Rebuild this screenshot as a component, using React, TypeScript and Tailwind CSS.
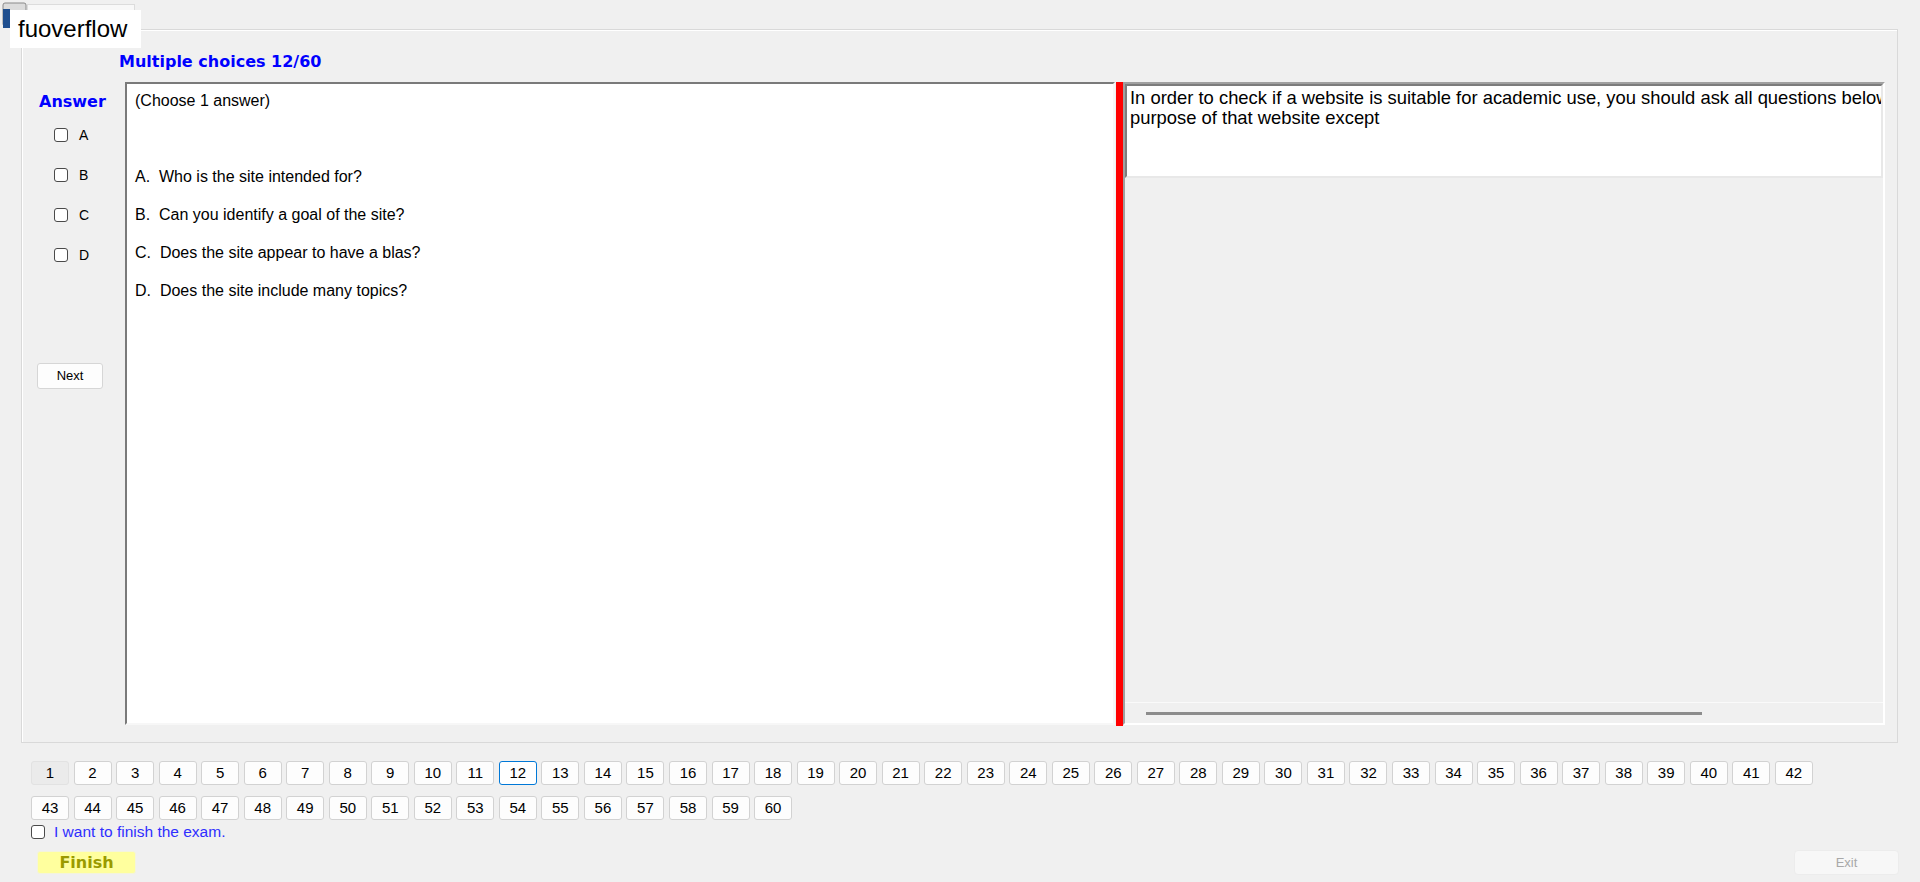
import React from "react";

const row1 = Array.from({ length: 42 }, (_, i) => i + 1);
const row2 = Array.from({ length: 18 }, (_, i) => i + 43);

const options = [
  "A.  Who is the site intended for?",
  "B.  Can you identify a goal of the site?",
  "C.  Does the site appear to have a blas?",
  "D.  Does the site include many topics?",
];

function Box({ className = "" }: { className?: string }) {
  return (
    <span
      className={`block size-[14px] shrink-0 rounded-[3px] border border-[#4a4a4a] bg-white ${className}`}
    />
  );
}

function NumButton({ n }: { n: number }) {
  let look = "border-[#d2d2d2] bg-[#fdfdfd]";
  if (n === 1) look = "border-[#e2e2e2] bg-[#ebebeb]";
  if (n === 12) look = "border-[#0078d7] bg-white";
  return (
    <button
      className={`flex h-[24px] w-[38px] items-center justify-center rounded-[3px] border font-['Liberation_Sans_Narrow','Liberation_Sans',sans-serif] text-[15px] text-black ${look}`}
    >
      {n}
    </button>
  );
}

export default function App() {
  return (
    <div className="relative h-[882px] w-[1920px] overflow-hidden bg-[#f0f0f0] font-['Liberation_Sans',Arial,sans-serif] text-black">
      {/* window icon + watermark label */}
      <svg className="absolute left-[1px] top-[1px]" width="27" height="27" viewBox="0 0 27 27">
        <rect x="2" y="2" width="23" height="23" rx="2" fill="#dcdcdc" stroke="#8a8a8a" />
        <rect x="2" y="8" width="7" height="19" fill="#1f4f8f" />
        <rect x="2" y="21" width="23" height="6" fill="#1f4f8f" />
      </svg>
      <div className="absolute left-[27px] top-[4px] h-[24px] w-[108px] border border-[#dcdcdc] bg-[#f8f8f8]" />
      <div className="absolute left-[10px] top-[10px] flex h-[38px] w-[131px] items-center bg-white pl-[8px] text-[24px] leading-none">
        fuoverflow
      </div>

      <div className="pl-[21px] pt-[29px]">
        <section className="flex h-[714px] w-[1877px] flex-col border border-[#d9d9d9] shadow-[inset_1px_1px_0_#ffffff]">
          <h1 className="ml-[97px] mt-[22px] h-[20px] font-['DejaVu_Sans',sans-serif] text-[16px] font-bold leading-[20px] text-[#0000ff]">
            Multiple choices 12/60
          </h1>

          <div className="mt-[10px] flex">
            {/* answer column */}
            <div className="flex w-[103px] flex-col">
              <div className="ml-[17px] mt-[10px] h-[20px] font-['DejaVu_Sans',sans-serif] text-[16px] font-bold leading-[20px] text-[#0000ff]">
                Answer
              </div>
              <div className="ml-[32px] mt-[13px] flex flex-col gap-[20px]">
                {["A", "B", "C", "D"].map((l) => (
                  <label key={l} className="flex h-[20px] items-center gap-[11px] text-[14px]">
                    <Box />
                    {l}
                  </label>
                ))}
              </div>
              <button className="ml-[15px] mt-[98px] h-[26px] w-[66px] rounded-[3px] border border-[#d6d6d6] bg-[#fdfdfd] font-['Liberation_Sans_Narrow','Liberation_Sans',sans-serif] text-[13px]">
                Next
              </button>
            </div>

            {/* question options */}
            <div className="h-[643px] w-[990px] border-2 border-b-[#f7f7f7] border-l-[#7a7a7a] border-r-[#f7f7f7] border-t-[#7a7a7a] bg-white pl-[8px] pt-[7px] text-[16px] leading-[20px]">
              <p>(Choose 1 answer)</p>
              <div className="mt-[56px] flex flex-col gap-[18px]">
                {options.map((o) => (
                  <p key={o} className="whitespace-pre">
                    {o}
                  </p>
                ))}
              </div>
            </div>

            <div className="ml-[1px] h-[644px] w-[7px] bg-[#ff0000]" />

            {/* question text */}
            <div className="flex h-[643px] w-[762px] flex-col border-2 border-b-[#ffffff] border-l-[#a0a0a0] border-r-[#ffffff] border-t-[#a0a0a0]">
              <div className="h-[94px] overflow-hidden border-2 border-b-[#e8e8e8] border-l-[#7c7c7c] border-r-[#e8e8e8] border-t-[#7c7c7c] bg-white pl-[3px] pt-[2px] text-[18.4px] leading-[20px]">
                <p className="whitespace-nowrap">
                  In order to check if a website is suitable for academic use, you should ask all questions below to find out the
                </p>
                <p className="whitespace-nowrap">purpose of that website except</p>
              </div>
              <div className="flex-1" />
              <div className="h-[21px] border-t border-[#fafafa] pt-[9px]">
                <div className="ml-[21px] h-[3px] w-[556px] bg-[#8c8c8c]" />
              </div>
            </div>
          </div>
        </section>
      </div>

      {/* question navigator */}
      <div className="mt-[18px] pl-[31px]">
        <div className="flex gap-[4.54px]">
          {row1.map((n) => (
            <NumButton key={n} n={n} />
          ))}
        </div>
        <div className="mt-[11px] flex gap-[4.54px]">
          {row2.map((n) => (
            <NumButton key={n} n={n} />
          ))}
        </div>
        <label className="mt-[4px] flex h-[15px] items-center gap-[9px] text-[15.5px] text-[#2e2eff]">
          <Box />
          I want to finish the exam.
        </label>
        <div className="mt-[11px] flex items-center justify-between pr-[21px]">
          <button className="ml-[6px] h-[23px] w-[99px] rounded-[3px] border border-[#f4f4dc] bg-[#ffff9e] font-['DejaVu_Sans',sans-serif] text-[16px] font-bold leading-none text-[#9a9a00]">
            Finish
          </button>
          <button className="h-[25px] w-[105px] rounded-[4px] border border-[#ececec] bg-[#f7f7f7] text-[13px] text-[#a8a8a8]">
            Exit
          </button>
        </div>
      </div>
    </div>
  );
}
